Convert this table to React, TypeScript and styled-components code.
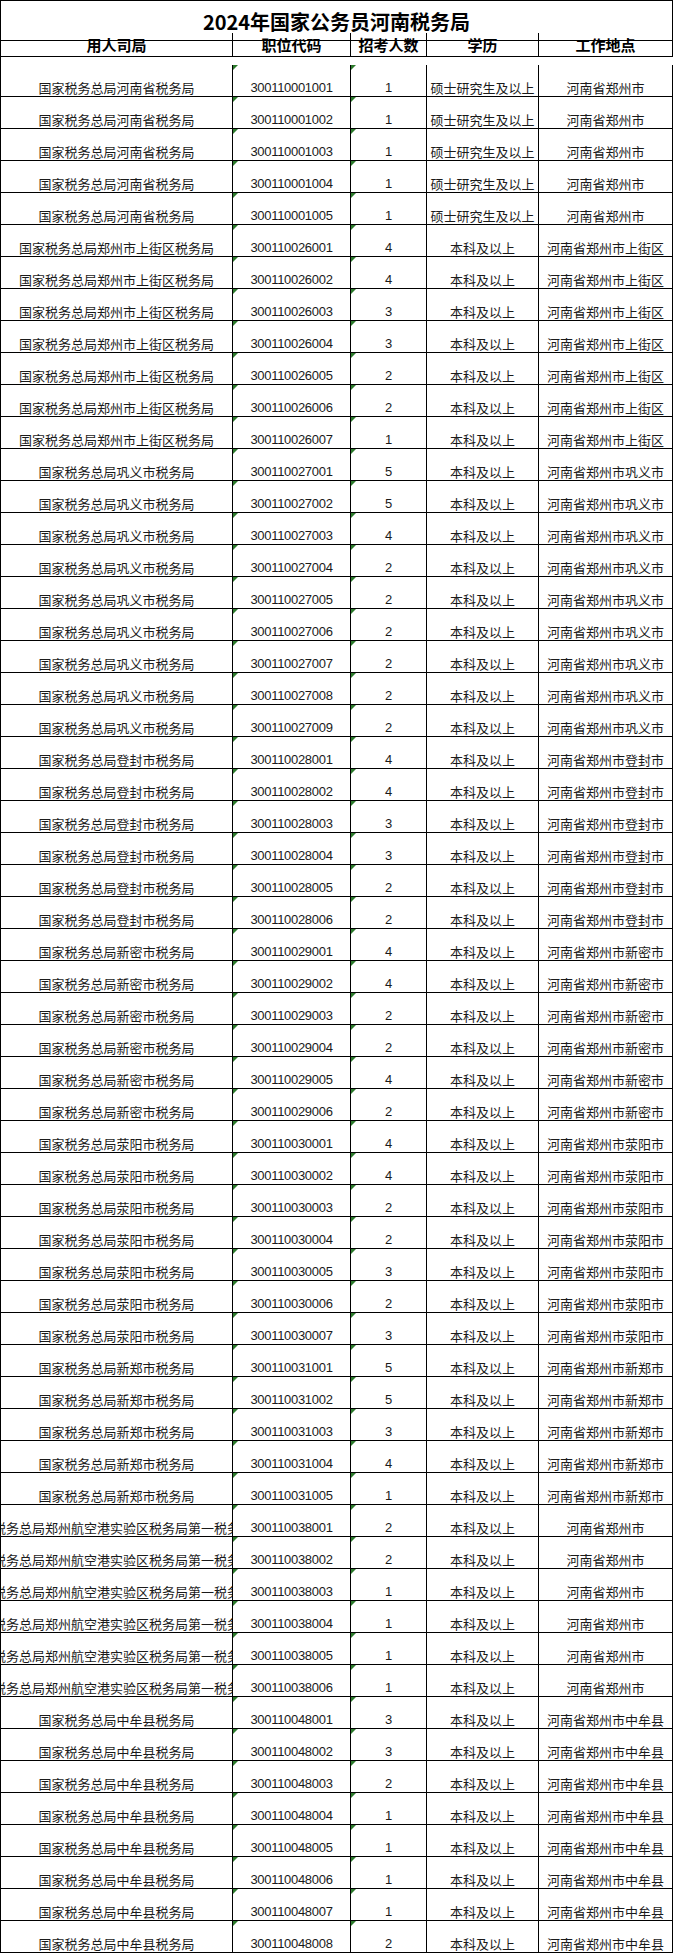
import React from "react";
import styled, { createGlobalStyle } from "styled-components";

const GlobalStyle = createGlobalStyle`
  html, body {
    margin: 0;
    padding: 0;
    background: #fff;
  }
  body {
    font-family: "Noto Sans CJK SC", "Liberation Sans", sans-serif;
    color: #111;
  }
`;

const Sheet = styled.div`
  display: grid;
  grid-template-columns: 232px 118px 76px 112px 134px;
  grid-auto-rows: 32px;
  width: max-content;
  border-left: 1px solid #000;
  border-top: 1px solid #000;
`;

const Title = styled.div`
  grid-column: 1 / -1;
  height: 40px;
  box-sizing: border-box;
  border-right: 1px solid #000;
  border-bottom: 1px solid #000;
  display: flex;
  align-items: center;
  justify-content: center;
  font-size: 20px;
  font-weight: 700;
  color: #000;
  padding-top: 1px;
`;

const HeadCell = styled.div`
  height: 24px;
  box-sizing: border-box;
  border-right: 1px solid #000;
  border-bottom: 1px solid #000;
  display: flex;
  align-items: center;
  justify-content: center;
  font-size: 15px;
  font-weight: 700;
  color: #000;
  white-space: nowrap;
`;

const Cell = styled.div<{ $num?: boolean; $flag?: boolean }>`
  position: relative;
  box-sizing: border-box;
  border-right: 1px solid #000;
  border-bottom: 1px solid #000;
  display: flex;
  align-items: flex-end;
  justify-content: center;
  overflow: hidden;
  white-space: nowrap;
  font-size: 13px;
  line-height: 15px;
  padding-bottom: 1px;
  font-family: ${(p) =>
    p.$num
      ? `"Liberation Sans", Arial, sans-serif`
      : `"Noto Sans CJK SC", "Liberation Sans", sans-serif`};
  letter-spacing: ${(p) => (p.$num ? "-0.3px" : "0")};
  color: #1a1a1a;

  &::before {
    content: "";
    display: ${(p) => (p.$flag ? "block" : "none")};
    position: absolute;
    top: 0;
    left: 0;
    border-top: 5px solid #2c7a2c;
    border-right: 5px solid transparent;
  }
`;

type Row = [string, string, number, string, string];

const groups: { unit: string; prefix: string; counts: number[]; edu: string; place: string }[] = [
  { unit: "国家税务总局河南省税务局", prefix: "300110001", counts: [1, 1, 1, 1, 1], edu: "硕士研究生及以上", place: "河南省郑州市" },
  { unit: "国家税务总局郑州市上街区税务局", prefix: "300110026", counts: [4, 4, 3, 3, 2, 2, 1], edu: "本科及以上", place: "河南省郑州市上街区" },
  { unit: "国家税务总局巩义市税务局", prefix: "300110027", counts: [5, 5, 4, 2, 2, 2, 2, 2, 2], edu: "本科及以上", place: "河南省郑州市巩义市" },
  { unit: "国家税务总局登封市税务局", prefix: "300110028", counts: [4, 4, 3, 3, 2, 2], edu: "本科及以上", place: "河南省郑州市登封市" },
  { unit: "国家税务总局新密市税务局", prefix: "300110029", counts: [4, 4, 2, 2, 4, 2], edu: "本科及以上", place: "河南省郑州市新密市" },
  { unit: "国家税务总局荥阳市税务局", prefix: "300110030", counts: [4, 4, 2, 2, 3, 2, 3], edu: "本科及以上", place: "河南省郑州市荥阳市" },
  { unit: "国家税务总局新郑市税务局", prefix: "300110031", counts: [5, 5, 3, 4, 1], edu: "本科及以上", place: "河南省郑州市新郑市" },
  { unit: "国家税务总局郑州航空港实验区税务局第一税务分局", prefix: "300110038", counts: [2, 2, 1, 1, 1, 1], edu: "本科及以上", place: "河南省郑州市" },
  { unit: "国家税务总局中牟县税务局", prefix: "300110048", counts: [3, 3, 2, 1, 1, 1, 1, 2], edu: "本科及以上", place: "河南省郑州市中牟县" },
];

const rows: Row[] = groups.flatMap((g) =>
  g.counts.map(
    (n, i): Row => [g.unit, g.prefix + String(i + 1).padStart(3, "0"), n, g.edu, g.place]
  )
);

const headers = ["用人司局", "职位代码", "招考人数", "学历", "工作地点"];

export default function App() {
  return (
    <>
      <GlobalStyle />
      <Sheet>
        <Title>2024年国家公务员河南税务局</Title>
        {headers.map((h) => (
          <HeadCell key={h}>{h}</HeadCell>
        ))}
        {rows.map(([unit, code, count, edu, place]) => (
          <React.Fragment key={code}>
            <Cell>{unit}</Cell>
            <Cell $num $flag>
              {code}
            </Cell>
            <Cell $num $flag>
              {count}
            </Cell>
            <Cell>{edu}</Cell>
            <Cell>{place}</Cell>
          </React.Fragment>
        ))}
      </Sheet>
    </>
  );
}
